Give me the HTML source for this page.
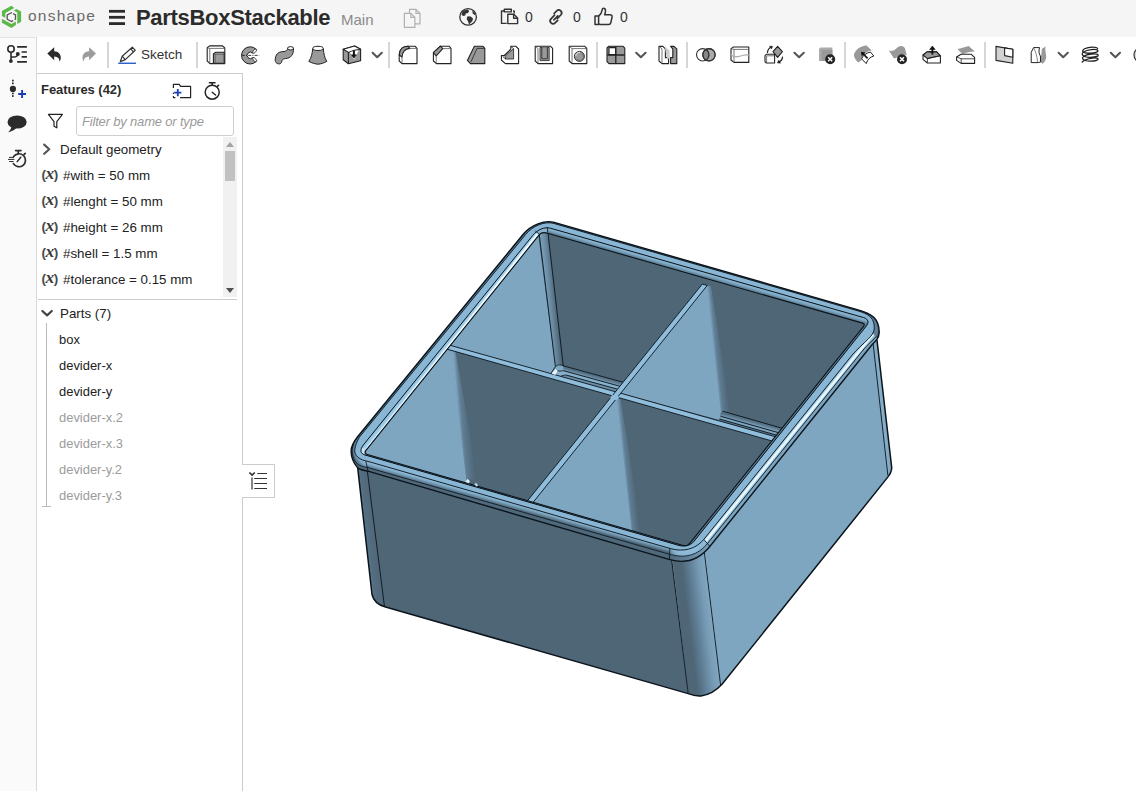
<!DOCTYPE html>
<html lang="en">
<head>
<meta charset="utf-8">
<title>PartsBoxStackable</title>
<style>
html,body{margin:0;padding:0;}
body{width:1136px;height:791px;overflow:hidden;position:relative;background:#fff;font-family:"Liberation Sans",sans-serif;color:#222;}
.abs{position:absolute;}
#topbar{left:0;top:0;width:1136px;height:37px;background:#f5f5f5;}
#leftbar{left:0;top:37px;width:36px;height:754px;background:#fafafa;border-right:1px solid #d9d9d9;}
#toolbar{left:37px;top:37px;width:1099px;height:36px;background:#fff;}
#panel{left:37px;top:73px;width:205px;height:718px;background:#fff;border-top:1px solid #ccc;border-right:1px solid #ccc;}
.sep{position:absolute;top:42px;width:2px;height:26px;background:#d6d6d6;}
.t{position:absolute;white-space:nowrap;line-height:1;}
.row{position:absolute;left:41px;font-size:13.35px;color:#222;white-space:nowrap;line-height:1;}
.prow{position:absolute;left:59px;font-size:12.95px;color:#222;white-space:nowrap;line-height:1;}
.dim{color:#9c9c9c;}
svg{position:absolute;overflow:visible;}
.vx{position:absolute;left:41.5px;font-size:13.5px;font-weight:bold;color:#4a4a4a;white-space:nowrap;line-height:1;letter-spacing:-0.6px;}
.vx i{font-family:"Liberation Serif",serif;font-weight:bold;font-style:italic;font-size:17.5px;letter-spacing:-0.3px;color:#3a3a3a;}
</style>
</head>
<body>
<div id="topbar" class="abs"></div>
<div id="leftbar" class="abs"></div>
<div id="toolbar" class="abs"></div>
<div id="panel" class="abs"></div>

<!-- top bar text -->
<div class="t" id="t-onshape" style="left:28px;top:7.8px;font-size:15.5px;color:#6a6a6a;letter-spacing:1.25px;">onshape</div>
<div class="t" id="t-title" style="left:136px;top:6.7px;font-size:22px;font-weight:bold;color:#2b2b2b;letter-spacing:-0.3px;">PartsBoxStackable</div>
<div class="t" id="t-main" style="left:341px;top:12px;font-size:15px;color:#8a8a8a;">Main</div>
<div class="t" id="t-c1" style="left:525px;top:10px;font-size:14px;color:#333;">0</div>
<div class="t" id="t-c2" style="left:573px;top:10px;font-size:14px;color:#333;">0</div>
<div class="t" id="t-c3" style="left:620px;top:10px;font-size:14px;color:#333;">0</div>

<!-- toolbar -->
<div class="sep" style="left:107px;"></div>
<div class="sep" style="left:196px;"></div>
<div class="sep" style="left:388px;"></div>
<div class="sep" style="left:596px;"></div>
<div class="sep" style="left:686px;"></div>
<div class="sep" style="left:844px;"></div>
<div class="sep" style="left:984px;"></div>
<div class="t" id="t-sketch" style="left:141px;top:47.9px;font-size:13.5px;color:#333;">Sketch</div>

<!-- panel -->
<div class="t" id="t-feat" style="left:41px;top:83.2px;font-size:13px;font-weight:bold;color:#2b2b2b;letter-spacing:-0.05px;">Features (42)</div>
<div class="abs" style="left:76px;top:106px;width:156px;height:28px;border:1px solid #cfcfcf;border-radius:3px;background:#fff;"></div>
<div class="t" id="t-filter" style="left:82px;top:115px;font-size:13px;font-style:italic;color:#9a9a9a;letter-spacing:-0.18px;">Filter by name or type</div>

<div class="abs" style="left:223px;top:137px;width:14px;height:160px;background:#f1f1f1;"></div>
<div class="abs" style="left:225px;top:151px;width:10px;height:30px;background:#c1c1c1;"></div>
<div class="abs" style="left:226px;top:142px;width:0;height:0;border-left:4px solid transparent;border-right:4px solid transparent;border-bottom:5px solid #a3a3a3;"></div>
<div class="abs" style="left:226px;top:288px;width:0;height:0;border-left:4px solid transparent;border-right:4px solid transparent;border-top:5px solid #505050;"></div>

<div class="row" style="left:60px;top:142.5px;">Default geometry</div>
<div class="row" style="left:63px;top:168.5px;">#with = 50 mm</div>
<div class="row" style="left:63px;top:194.5px;">#lenght = 50 mm</div>
<div class="row" style="left:63px;top:220.5px;">#height = 26 mm</div>
<div class="row" style="left:63px;top:246.5px;">#shell = 1.5 mm</div>
<div class="row" style="left:63px;top:272.5px;">#tolerance = 0.15 mm</div>

<div class="vx" style="top:164.5px;">(<i>x</i>)</div>
<div class="vx" style="top:190.5px;">(<i>x</i>)</div>
<div class="vx" style="top:216.5px;">(<i>x</i>)</div>
<div class="vx" style="top:242.5px;">(<i>x</i>)</div>
<div class="vx" style="top:268.5px;">(<i>x</i>)</div>
<div class="abs" style="left:38px;top:299px;width:199px;height:1px;background:#ccc;"></div>
<div class="row" style="left:60px;top:306.8px;">Parts (7)</div>
<div class="prow" style="top:333.6px;">box</div>
<div class="prow" style="top:359.6px;">devider-x</div>
<div class="prow" style="top:385.6px;">devider-y</div>
<div class="prow dim" style="top:411.6px;">devider-x.2</div>
<div class="prow dim" style="top:437.6px;">devider-x.3</div>
<div class="prow dim" style="top:463.6px;">devider-y.2</div>
<div class="prow dim" style="top:489.6px;">devider-y.3</div>
<div class="abs" style="left:46px;top:323px;width:1px;height:184px;background:#bbb;"></div>
<div class="abs" style="left:42px;top:506px;width:9px;height:1px;background:#bbb;"></div>

<!-- panel collapse tab -->
<div class="abs" style="left:242px;top:464px;width:32px;height:32px;background:#fff;border:1px solid #ccc;border-left:none;"></div>
<div class="abs" style="left:0;top:37px;width:36px;height:1px;background:#e4e4e4;"></div>
<svg width="1136" height="75" viewBox="0 0 1136 75" style="left:0;top:0;">
<!-- onshape logo -->
<g>
<polygon points="1.9,11.1 11.4,5.8 14.3,7.9 5.3,12.9 5.3,18 1.9,16.1" fill="#5cb848"/>
<polygon points="13.7,10.6 16.4,9 21.1,11.4 21.1,21.7 17.4,24 17.2,12.4" fill="#5cb848"/>
<polygon points="1.9,18.8 11.4,24 15.9,21.4 15.9,25.1 11.4,28 1.9,22.7" fill="#5cb848"/>
<polyline points="12,12.5 7.2,15 7.2,19.2 11.4,21.5 13.2,20.6" fill="none" stroke="#555" stroke-width="1.3"/>
<polyline points="13.2,13.6 15.5,14.9 15.5,19.2 14.6,19.8" fill="none" stroke="#555" stroke-width="1.3"/>
</g>
<!-- hamburger -->
<rect x="109" y="9.9" width="16" height="2.8" fill="#2b2b2b"/><rect x="109" y="15.9" width="16" height="2.8" fill="#2b2b2b"/><rect x="109" y="22.2" width="16" height="2.8" fill="#2b2b2b"/>
<!-- copy icon (gray) -->
<g fill="#f5f5f5" stroke="#b0b0b0" stroke-width="1.2" stroke-linejoin="round">
<path d="M409.5,9.4 h6.5 l4,4 v10.5 h-10.5 z"/><path d="M416,9.4 v4 h4" fill="none"/>
<path d="M404.4,13.4 h6.5 l4,4 v10 h-10.5 z"/><path d="M410.9,13.4 v4 h4" fill="none"/>
</g>
<!-- globe -->
<g>
<circle cx="468.1" cy="16.9" r="8.3" fill="#f5f5f5" stroke="#333" stroke-width="1.3"/>
<path d="M462.5,11.5 c1.5,-1.2 3.5,-2 5.2,-2 l1.5,1.6 -1.2,1.8 -2.2,0.5 -0.6,2 -2,0.6 -1.8,-1.2 z" fill="#333"/>
<path d="M467.5,16.3 l3.2,0.3 2.3,1.8 -0.6,2.6 -2.2,2.3 -1.2,1.2 -0.9,-3 -1.5,-2.4 z" fill="#333"/>
<path d="M472.5,10.8 c1.5,1 2.8,2.6 3.3,4.3 l-1.8,-0.3 -1.5,-1.7 z" fill="#333"/>
</g>
<!-- clipboard -->
<g fill="none" stroke="#333" stroke-width="1.4" stroke-linejoin="round">
<path d="M506.5,11 h-5 v12.4 h5.2"/><path d="M513,11 h1.2 v2.5"/>
<rect x="504.3" y="9.3" width="7" height="2.6" fill="#f5f5f5"/>
<path d="M507.8,14.2 h6 l3.8,3.8 v5.6 h-9.8 z" fill="#f5f5f5"/><path d="M513.6,14.4 v3.8 h3.8"/>
</g>
<!-- link -->
<g fill="none" stroke="#333" stroke-width="1.7" stroke-linecap="round">
<path d="M554.6,15.2 l-3.6,3.6 a2.9,2.9 0 0 0 4.1,4.1 l2.6,-2.6"/>
<path d="M557.2,18.6 l3.6,-3.6 a2.9,2.9 0 0 0 -4.1,-4.1 l-2.6,2.6"/>
<path d="M553.9,19.9 l4,-4"/>
</g>
<!-- thumbs up -->
<g fill="none" stroke="#333" stroke-width="1.5" stroke-linejoin="round">
<path d="M595,16 h3.6 v8.6 h-3.6 z"/>
<path d="M598.6,16.2 c2,-1.6 3.2,-3.6 3.6,-6.4 c0.1,-1.2 0.8,-1.6 1.6,-1.5 c1.2,0.2 1.8,1.2 1.7,2.8 c-0.1,1.2 -0.4,2.4 -0.9,3.6 h5.4 c1.5,0 2.3,0.9 2.1,2.1 l-1.3,6 c-0.3,1.2 -1,1.8 -2.2,1.8 h-7.5 c-0.9,0 -1.6,-0.3 -2.5,-0.8"/>
</g>

<!-- left bar icon 1: feature tree -->
<g stroke="#2b2b2b" fill="none" stroke-width="1.6">
<circle cx="11" cy="49" r="3.2" fill="#fafafa"/>
<path d="M11,52.2 V61 M11,57 H13.8 C16.4,57 17.6,56 17.8,54"/>
<circle cx="10.9" cy="61.1" r="1.9" fill="#2b2b2b" stroke="none"/><circle cx="17.8" cy="53.9" r="2" fill="#2b2b2b" stroke="none"/>
<path d="M17.1,46.8 H26.9 M21.6,52 H26.9 M21.6,56.9 H26.9 M17.1,61.9 H26.9" stroke-width="1.7"/>
</g>

<!-- undo / redo -->
<path d="M47.3,53.6 L54.2,47.2 V51.2 C58.5,51.4 60.8,54.2 60.8,57.6 C60.8,59.2 60.3,60.6 59.5,61.8 C59.6,58.6 58,56.6 54.2,56.4 V60.2 Z" fill="#2b2b2b"/>
<path d="M96,53.6 L89.1,47.2 V51.2 C84.8,51.4 82.5,54.2 82.5,57.6 C82.5,59.2 83,60.6 83.8,61.8 C83.7,58.6 85.3,56.6 89.1,56.4 V60.2 Z" fill="#9c9c9c"/>
<!-- pencil -->
<g fill="none" stroke="#333" stroke-width="1.2" stroke-linejoin="round">
<path d="M120.3,61.8 L122.2,56.2 L132.3,47.2 L135.2,50.2 L125.3,59.6 Z"/><path d="M122.2,56.2 L125.3,59.6"/><path d="M130.6,48.8 L133.5,51.8"/>
</g>
<rect x="118.2" y="62.6" width="17.8" height="1.3" fill="#1a53c5"/>

<!-- tb icon 1: extrude -->
<g stroke="#222" stroke-width="1.1" stroke-linejoin="round">
<path d="M207.2,47.8 L209.6,45.9 H222.6 L224.8,48 V63.6 H210 L207.2,61 Z" fill="#fff"/>
<path d="M209.8,48.4 H224.6 M209.8,48.4 V63.4 M207.4,47.9 L209.8,48.4" fill="none" stroke-width="0.8" stroke="#555"/>
<path d="M213.4,54 L215.4,52.3 H224.2 V63.2 H213.4 Z" fill="#999"/>
<path d="M215.2,54.3 H224 M215.2,54.3 V63 M213.5,54 L215.2,54.3" fill="none" stroke-width="0.7" stroke="#555"/>
</g>
<!-- tb icon 2: revolve -->
<g stroke="#222" stroke-width="1">
<path d="M256.3,49.4 A8.6,8.6 0 1 0 256.3,61.4 L252.6,57.6 A3.2,3.2 0 1 1 252.6,53.2 Z" fill="#999"/>
<ellipse cx="254.6" cy="51.2" rx="2.6" ry="1.3" transform="rotate(-48 254.6 51.2)" fill="#fff" stroke-width="0.8"/>
<ellipse cx="254.6" cy="59.6" rx="2.6" ry="1.3" transform="rotate(48 254.6 59.6)" fill="#fff" stroke-width="0.8"/>
<path d="M241.8,55.4 H259.2" stroke-dasharray="3 1.2 1 1.2" fill="none" stroke-width="0.9"/>
</g>
<!-- tb icon 3: sweep -->
<g stroke="#222" stroke-width="1" stroke-linejoin="round">
<path d="M275.2,60.4 C275.2,54.6 278,51.8 283,51.6 C286,51.5 287.4,50.8 287.6,48.2 L293.5,48.2 C293.8,54.4 291,58.2 285.6,58.6 C282.8,58.8 282,59.6 281.8,61.6 C281.5,65 275.4,64.6 275.2,60.4 Z" fill="#999"/>
<ellipse cx="290.5" cy="48.3" rx="2.9" ry="1.7" fill="#fff"/>
</g>
<!-- tb icon 4: loft -->
<g stroke="#222" stroke-width="1" stroke-linejoin="round">
<path d="M312.8,48.4 C312.2,54 311.2,58 308.8,61.4 C312,63 315,64 318,64.2 C321,64 324,63 326.8,61.4 C324.6,58 323.8,54 323.2,48.4 Z" fill="#999"/>
<ellipse cx="318" cy="48.4" rx="5.2" ry="2.1" fill="#fff"/>
</g>
<!-- tb icon 5: thicken -->
<g stroke="#222" stroke-width="1.1" stroke-linejoin="round">
<path d="M343.2,49.2 L354.6,46 L360.6,49.2 V60.7 L348.4,63.8 L343.2,59.8 Z" fill="#999"/>
<path d="M343.2,49.2 L354.6,46 L360.6,49.2 C356.5,49.4 352.5,50.4 348.4,52.4 Z" fill="#fff"/>
<path d="M348.4,52.4 V63.8" fill="none"/>
<path d="M349.8,52.2 C352.6,51 355.6,50.4 358.6,50.4 L354.1,59.8 Z" fill="#fff" stroke="none"/>
<path d="M353.9,50.6 V56" stroke="#111" stroke-width="2" fill="none"/><path d="M351.3,54.8 H356.5 L353.9,58.2 Z" fill="#111" stroke="#111" stroke-width="0.5"/>
</g>
<!-- chevrons -->
<g fill="none" stroke="#555" stroke-width="2.1" stroke-linecap="round" stroke-linejoin="round">
<path d="M372.6,52.8 L377.2,57.2 L381.8,52.8"/>
<path d="M636.2,52.8 L640.9,57.2 L645.6,52.8"/>
<path d="M794.4,52.8 L799.1,57.2 L803.8,52.8"/>
<path d="M1058.6,52.8 L1063.2,57.2 L1067.8,52.8"/>
<path d="M1110.8,52.8 L1115.4,57.2 L1120,52.8"/>
</g>
<!-- tb icon 6: fillet -->
<g stroke="#222" stroke-width="1.1" stroke-linejoin="round">
<path d="M399.2,55 C399.4,49.4 403,46.2 408,46.2 H415 L417,48.4 V63.6 H402 L399.2,61 Z" fill="#fff"/>
<path d="M399.2,55 C399.4,49.4 403,46.2 408,46.2 L409.8,48.4 C405.6,48.8 402.4,51.6 402,57 Z" fill="#999"/>
<path d="M402,57 V63.4 M409.8,48.4 H416.8" fill="none" stroke-width="0.8" stroke="#555"/>
</g>
<!-- tb icon 7: chamfer -->
<g stroke="#222" stroke-width="1.1" stroke-linejoin="round">
<path d="M433.4,52.6 L440.4,46.2 H449 L451,48.4 V63.6 H436.4 L433.4,61 Z" fill="#fff"/>
<path d="M433.4,52.6 L440.4,46.2 L442.8,48.6 L436.2,55.8 Z" fill="#999"/>
<path d="M436.2,55.8 V63.4 M442.8,48.6 H450.8" fill="none" stroke-width="0.8" stroke="#555"/>
</g>
<!-- tb icon 8: draft -->
<g stroke="#222" stroke-width="1.1" stroke-linejoin="round">
<path d="M467.4,60.4 L474.4,46.2 H482.8 L484.8,48.4 V63.6 H470.4 Z" fill="#999"/>
<path d="M471,61.8 L477,48.4 H484.6" fill="none" stroke-width="0.8"/>
</g>
<!-- tb icon 9: rib -->
<g stroke="#222" stroke-width="1.1" stroke-linejoin="round">
<path d="M501.4,55.6 H504 L510.8,49.2 V46.2 H515.6 L518.6,49 V63.6 H505.4 L501.4,60 Z" fill="#fff"/>
<path d="M505,56.2 L513.6,48.6 V59 H505.6 Z" fill="#999" stroke-width="0.8"/>
<path d="M504.2,55.8 L511,49.4 M505.6,59 L503,56.8 M513.6,48.6 L511,46.6" fill="none" stroke-width="0.8"/>
</g>
<!-- tb icon 10: shell -->
<g stroke="#222" stroke-width="1.1" stroke-linejoin="round">
<path d="M535.2,46.2 H550.4 L552.6,48.4 V63.6 H538 L535.2,61 Z" fill="#fff"/>
<path d="M540,47.4 H549.2 V60.6 H540 Z" fill="#999" stroke-width="0.8"/>
<path d="M541.8,47.4 V58.8 H547.4 V47.4" fill="#999" stroke-width="0.8"/>
<path d="M538,48.6 V63.4 M535.4,46.4 L538,48.6" fill="none" stroke-width="0.8" stroke="#555"/>
</g>
<!-- tb icon 11: hole -->
<g stroke="#222" stroke-width="1.1" stroke-linejoin="round">
<path d="M569.2,46.2 H584.6 L586.8,48.4 V63.6 H572 L569.2,61 Z" fill="#fff"/>
<path d="M572,48.6 H586.6 M572,48.6 V63.4 M569.4,46.4 L572,48.6" fill="none" stroke-width="0.8" stroke="#555"/>
<circle cx="579.4" cy="56.4" r="5" fill="#999" stroke-width="0.9"/>
<path d="M575.8,56 A3.6,3.6 0 0 1 579.8,52.4" fill="none" stroke="#eee" stroke-width="1"/>
<path d="M582.6,54.2 A3.6,3.6 0 0 1 577,59.4" fill="none" stroke="#666" stroke-width="0.9"/>
</g>
<!-- tb icon 12: pattern -->
<g stroke="#222" stroke-width="1.1" stroke-linejoin="round">
<path d="M607,48 L608.8,46.2 H622.8 L624.8,48.2 V63.6 H609 L607,61.6 Z" fill="#999"/>
<rect x="609" y="47.6" width="6.6" height="7" fill="#fff"/>
<path d="M615.8,46.4 V63.4 M607.2,55 H624.6" fill="none" stroke-width="1.3"/>
</g>
<!-- tb icon 13: mirror -->
<g stroke="#222" stroke-width="1.1" stroke-linejoin="round">
<path d="M659,46.4 H662.8 L665.4,48.8 V57.6 H668.6 V63.6 H662 L659,61 Z" fill="#fff"/>
<path d="M662,48.8 V63.4 M659.2,46.6 L662,48.8" fill="none" stroke-width="0.8" stroke="#555"/>
<path d="M664.8,46.4 L669.6,50.4 V59.6 L666.6,57.2 Z" fill="#ccc" stroke="none"/>
<path d="M670.6,46.4 H674 L676.8,48.8 V63.6 H670.6 V57.6 H672.8 V48.8 Z" fill="#999"/>
</g>
<!-- tb icon 14: boolean -->
<g stroke="#333" stroke-width="1.1">
<circle cx="709" cy="54.8" r="6.2" fill="#aaa"/>
<circle cx="702.7" cy="54.8" r="6.2" fill="#fff"/>
<path d="M705.85,49.46 A6.2,6.2 0 0 1 705.85,60.14 A6.2,6.2 0 0 1 705.85,49.46 Z" fill="#888"/>
<circle cx="709" cy="54.8" r="6.2" fill="none"/>
</g>
<!-- tb icon 15: split -->
<g stroke="#222" stroke-width="1.1" stroke-linejoin="round" fill="none">
<path d="M731,48.6 L733.6,47 H748.8 V62.4 H734 L731,60 Z" fill="#fff"/>
<path d="M734,49.4 H748.6 M734,49.4 V62.2 M731.2,48.7 L734,49.4" stroke-width="0.8" stroke="#555"/>
<path d="M730.6,54.4 C733,57 735.6,57.4 739,56.4 C743,55 746,54.4 750,55.2" stroke="#aaa" stroke-width="1.1"/>
</g>
<!-- tb icon 16: transform -->
<g stroke="#222" stroke-width="1.1" stroke-linejoin="round">
<path d="M765,55.6 L766.6,54.2 H774.6 V63 H766.4 L765,61.8 Z" fill="#fff"/>
<path d="M766.6,55.8 H774.4 M766.6,55.8 V62.8" fill="none" stroke-width="0.8" stroke="#555"/>
<path d="M777.6,46.4 L782.4,51.6 L777.6,57.4 L773,51.6 Z" fill="#999"/>
<path d="M767.4,53 C767.6,50 769,48 771.4,46.8" fill="none" stroke-width="1.2"/><path d="M769.6,46.2 L772.6,46.4 L771.4,49 Z" fill="#222" stroke-width="0.6"/>
<path d="M782.6,56.6 C782.4,59.4 781,61.2 778.8,62.4" fill="none" stroke-width="1.2"/><path d="M780.4,63.2 L777.4,62.8 L778.8,60.2 Z" fill="#222" stroke-width="0.6"/>
</g>
<!-- tb icon 17: delete part -->
<g>
<path d="M819,49 L820.6,47.6 H832.4 V61 H819 Z" fill="#aaa"/>
<path d="M821.6,50 H832.4 V61 H821.6 Z" fill="#999"/>
<circle cx="830.2" cy="59.2" r="5" fill="#222"/>
<path d="M828.2,57.2 L832.2,61.2 M832.2,57.2 L828.2,61.2" stroke="#fff" stroke-width="1.5" fill="none"/>
</g>
<!-- tb icon 18: move face -->
<g stroke-linejoin="round">
<path d="M853.8,55 C855.4,49.6 860.4,46 866.6,45.6 L871.6,50.4 C866,51.2 863,54.6 861.8,60 L858.4,62.6 C856,60.6 854.4,58 853.8,55 Z" fill="#999"/>
<path d="M861.6,58.8 C863,55.6 866,53 870.4,52 L873.8,56 C870,57 867.4,59.6 866.2,63.6 Z" fill="#fff" stroke="#222" stroke-width="1"/>
<path d="M862,52.8 L867.6,58.4" stroke="#111" stroke-width="1.6" fill="none"/><path d="M861,51.8 L865.4,52.6 L861.8,56.2 Z" fill="#111"/>
</g>
<!-- tb icon 19: delete face -->
<g>
<path d="M888.8,50.6 C892,52 895,50 898,47 C900.6,45 903.6,46 904.8,48 L906.8,55 C903,53.6 900,54.6 897,57.6 L894,58.6 Z" fill="#999"/>
<circle cx="902" cy="59.2" r="5" fill="#222"/>
<path d="M900,57.2 L904,61.2 M904,57.2 L900,61.2" stroke="#fff" stroke-width="1.5" fill="none"/>
</g>
<!-- tb icon 20: replace face -->
<g stroke="#222" stroke-width="1.1" stroke-linejoin="round">
<path d="M923,55 L927.4,51.6 H936.4 L940.4,55.8 V63 H927.4 L923,59.4 Z" fill="#fff"/>
<path d="M923,55 L927.4,51.6 C930,53 933,52 936.4,51.6 L940.4,55.8 C936,56.6 931.6,57.4 927.4,58.6 Z" fill="#999"/>
<path d="M927.4,58.6 V62.8 M927.4,58.6 L940.2,55.9" fill="none" stroke-width="0.8"/>
<path d="M932.4,54.6 V48.6" stroke="#111" stroke-width="1.8" fill="none"/><path d="M929.6,49.6 L932.4,46 L935.2,49.6 Z" fill="#111" stroke="#111" stroke-width="0.6"/>
</g>
<!-- tb icon 21: offset surface -->
<g stroke-linejoin="round">
<path d="M957.4,49 C961,48.6 964,47.4 968.6,46 L974.8,51.4 C970,51.6 966,52.6 962.4,54 Z" fill="#999"/>
<path d="M956.6,57 L961,54.2 H971 L974.6,57.4 V63.4 H961.2 L956.6,60.4 Z" fill="#fff" stroke="#222" stroke-width="1.1"/>
<path d="M956.8,57 L961.2,58.8 H974.4 M961.2,58.8 V63.2" fill="none" stroke="#222" stroke-width="0.8"/>
</g>
<!-- tb icon 22: plane -->
<g stroke="#222" stroke-width="1.1" stroke-linejoin="round">
<path d="M996,46.4 L1012.8,49.2 V63.2 L996,60.4 Z" fill="#d2d2d2"/>
<path d="M1004.6,47.9 L1012.8,49.2 V57.2 L1004.6,55.6 Z" fill="#fff"/>
</g>
<!-- tb icon 23 -->
<g stroke-linejoin="round">
<path d="M1042,48.8 L1045.6,46.6 C1044.6,50 1046.4,54 1046.2,57.6 C1046,60.2 1044.4,62.4 1042.6,63.8 L1040.4,62 Z" fill="#999"/>
<path d="M1031.2,52.4 L1033.6,47.6 H1039.6 C1038.6,51 1038.8,53.6 1040.4,56 L1040.6,62 L1038.2,62.6 H1031.2 Z" fill="#fff" stroke="#222" stroke-width="1"/>
<path d="M1033.6,47.6 C1035.4,51 1037,55.6 1037.6,62.4" fill="none" stroke="#555" stroke-width="0.7"/>
</g>
<!-- tb icon 24: helix -->
<g fill="none" stroke="#222" stroke-width="1.3" stroke-linecap="round">
<path d="M1097.6,48.6 C1097,46.6 1089,46.4 1084.6,48.8 C1080.6,51 1083,53.6 1090,53.2 C1096,52.8 1099,51.6 1097.6,50.2 C1096,48.8 1087,49.6 1083.6,52 C1080,54.6 1084,57.6 1090.4,57.4 C1096.4,57.2 1099.2,56 1097.8,54.6 C1096,53 1087,54 1083.6,56.4 C1081,58.4 1083.4,61.4 1090.4,61.2 C1096,61 1099,59.8 1097.8,58.6 C1096,57 1086,58.4 1082.2,62"/>
</g>
<!-- tb icon 25 partial -->
<circle cx="1142" cy="55" r="8" fill="#ddd" stroke="#333" stroke-width="1.2"/>
</svg>

<svg width="40" height="120" viewBox="0 73 40 120" style="left:0;top:73px;">
<!-- insert icon -->
<g fill="#2b2b2b">
<rect x="12" y="79.7" width="1.7" height="1.7"/><rect x="12" y="82.5" width="1.7" height="1.7"/>
<rect x="12" y="92.6" width="1.7" height="1.7"/><rect x="12" y="95.2" width="1.7" height="1.7"/>
<circle cx="12.9" cy="88.9" r="3.1"/>
</g>
<path d="M18.2,94 H26 M22.1,90.1 V97.9" stroke="#1a3fb5" stroke-width="1.9" fill="none"/>
<!-- comment bubble -->
<ellipse cx="17.1" cy="122" rx="9.6" ry="6.6" fill="#2b2b2b"/>
<path d="M11.4,126.6 C11.2,128.8 10.2,130.6 8.2,132.2 C11.8,131.6 14.6,130 16.2,128 Z" fill="#2b2b2b"/>
<!-- stopwatch w/ speed lines -->
<g fill="none" stroke="#2b2b2b" stroke-width="1.7" stroke-linecap="round">
<path d="M13.6,156.6 A6.5,6.5 0 1 1 13.4,163.6"/>
<path d="M15.6,150.6 H21 M18.3,150.8 V153.4 M24.2,154.4 L25.2,153.4" stroke-width="1.6"/>
<path d="M17.2,161.6 L20.8,157.2" stroke-width="1.5"/>
<path d="M9.4,157.4 H13.6 M8.4,159.4 H14 M9.6,161.5 H13.2" stroke-width="1"/>
</g>
</svg>

<svg width="205" height="60" viewBox="37 78 205 60" style="left:37px;top:78px;">
<!-- folder+ icon -->
<g fill="none" stroke="#222" stroke-width="1.2" stroke-linejoin="round">
<path d="M173.4,88 V84.4 H179.2 L180.6,86.4 H190.6 V97.6 H180"/>
<path d="M173.4,92.4 V94 M173.4,96 V97.6 H175.4" stroke-width="1.1"/>
</g>
<path d="M174.2,92.6 H181.4 M177.8,89 V96.2" stroke="#1a3fb5" stroke-width="1.8" fill="none"/>
<!-- stopwatch -->
<g fill="none" stroke="#222" stroke-width="1.5" stroke-linecap="round">
<circle cx="212.2" cy="92.2" r="7"/>
<path d="M209.4,82.8 H215 M212.2,83 V85 M218.6,85.2 L217.4,86.4"/>
<path d="M212.2,92.2 L215.6,95" stroke-width="1.4"/>
</g>
<!-- funnel -->
<path d="M48.4,114.4 H62.4 L56.8,121.6 V127.8 L54,126.2 V121.6 Z" fill="none" stroke="#222" stroke-width="1.2" stroke-linejoin="round"/>
</svg>

<!-- chevrons in panel & (x) icons & tab icon -->
<svg width="240" height="400" viewBox="37 137 240 400" style="left:37px;top:137px;">
<path d="M44.2,144.6 L49.2,149.2 L44.2,153.8" fill="none" stroke="#555" stroke-width="2.2" stroke-linecap="round" stroke-linejoin="round"/>
<path d="M42.4,311 L47.1,315.4 L51.8,311" fill="none" stroke="#444" stroke-width="2.2" stroke-linecap="round" stroke-linejoin="round"/>
<g fill="none" stroke="#333" stroke-width="1.1">
<path d="M249.4,472.5 L252.1,475 L254.8,472.5" stroke-width="1.7"/>
<path d="M252,477.4 V489.6" stroke="#777" stroke-width="1.8"/>
<path d="M257.3,473.5 H267 M254.2,478.5 H267 M254.2,483.5 H267 M254.2,488.5 H267" stroke-width="1.2"/>
</g>
</svg>
<svg id="box" width="1136" height="791" viewBox="0 0 1136 791" style="left:0;top:0;">
<defs>
<clipPath id="ring_S"><path clip-rule="evenodd" d="M523.0,234.5 C530.8,225.0 544.6,219.7 554.2,222.4 L858.0,309.8 C864,311.5 870,313.6 874,317.5 C877.5,321 879.3,326 879.2,332.5 C879.1,335.5 878.2,337.8 876.9,339.4 L871.2,345.8 L710.0,546.3 C699.3,559.7 685.6,564.2 669.8,559.6 L368.0,471.2 C363.5,470.4 360.2,469.6 357.7,467.9 C354,463.5 351.2,458 351.1,451.5 C351,447 353.3,442.2 357.4,437 Z M524.2,234.4 C531.7,225.3 544.7,220.2 553.8,222.8 L858.0,310.3 C864,312 869.5,314.2 873.2,318 C876.5,321.5 878,326 877.9,331 C877.8,334 876.6,336.4 874.6,338.4 C871.6,341.4 866.4,345.9 863.9,349 L707.2,543.9 C698.3,554.9 685.1,558.7 670.3,554.5 L368.0,467.6 C363,466.6 359.5,465.8 357.2,463.8 C354,460.5 352.2,456 352.1,451.5 C352,447 354.2,442.5 358.3,437 Z"/></clipPath>
<clipPath id="ring_F2"><path clip-rule="evenodd" d="M524.2,234.4 C531.7,225.3 544.7,220.2 553.8,222.8 L858.0,310.3 C864,312 869.5,314.2 873.2,318 C876.5,321.5 878,326 877.9,331 C877.8,334 876.6,336.4 874.6,338.4 C871.6,341.4 866.4,345.9 863.9,349 L707.2,543.9 C698.3,554.9 685.1,558.7 670.3,554.5 L368.0,467.6 C363,466.6 359.5,465.8 357.2,463.8 C354,460.5 352.2,456 352.1,451.5 C352,447 354.2,442.5 358.3,437 Z M525.7,234.4 C532.7,225.8 545.1,220.9 553.7,223.4 L857.0,310.6 C863,312.4 867.5,314 870.5,317 C873.5,320 874.6,324.5 874.2,329 C873.9,332.5 871.5,336 867.8,339.4 C864.3,343 856,350.3 852.2,355 L704.1,539.1 C696.4,548.8 683.6,552.4 670.5,548.6 L368.0,461.4 C364,460.6 360.5,459.5 357.8,457.2 C355.5,455 354.5,452.5 354.8,449.5 C355.2,445.5 357,441.5 359.5,437 Z"/></clipPath>
<clipPath id="ring_F1"><path clip-rule="evenodd" d="M525.7,234.4 C532.7,225.8 545.1,220.9 553.7,223.4 L857.0,310.6 C863,312.4 867.5,314 870.5,317 C873.5,320 874.6,324.5 874.2,329 C873.9,332.5 871.5,336 867.8,339.4 C864.3,343 856,350.3 852.2,355 L704.1,539.1 C696.4,548.8 683.6,552.4 670.5,548.6 L368.0,461.4 C364,460.6 360.5,459.5 357.8,457.2 C355.5,455 354.5,452.5 354.8,449.5 C355.2,445.5 357,441.5 359.5,437 Z M532.6,235.6 C537.5,229.5 544.6,226.6 550.4,228.2 L863.7,317.6 C868.3,319.0 869.3,322.3 866.3,326.1 L694.1,541.2 C690.8,545.4 684.7,547.1 678.9,545.4 L364.8,454.9 C360.2,453.6 359.7,449.6 363.4,444.9 Z"/></clipPath>
<clipPath id="ring_P2"><path clip-rule="evenodd" d="M532.6,235.6 C537.5,229.5 544.6,226.6 550.4,228.2 L863.7,317.6 C868.3,319.0 869.3,322.3 866.3,326.1 L694.1,541.2 C690.8,545.4 684.7,547.1 678.9,545.4 L364.8,454.9 C360.2,453.6 359.7,449.6 363.4,444.9 Z M539.3,234.7 C540.8,232.8 544.1,232.2 547.6,233.2 L862.6,323.1 C864.3,323.6 864.7,324.9 863.6,326.3 L690.2,542.8 C688.4,545.1 685.2,546.2 682.3,545.3 L367.4,454.5 C365.1,453.9 364.5,452.2 366.0,450.3 Z"/></clipPath>
<clipPath id="open"><path d="M539.3,234.7 C540.8,232.8 544.1,232.2 547.6,233.2 L862.6,323.1 C864.3,323.6 864.7,324.9 863.6,326.3 L690.2,542.8 C688.4,545.1 685.2,546.2 682.3,545.3 L367.4,454.5 C365.1,453.9 364.5,452.2 366.0,450.3 Z"/></clipPath>
<linearGradient id="gFrontFillet" gradientUnits="userSpaceOnUse" x1="480.0" y1="493.7" x2="478.4" y2="499.4"><stop offset="0" stop-color="#8ebcda"/><stop offset="0.35" stop-color="#7ea8c4"/><stop offset="1" stop-color="#4a6172"/></linearGradient>
<linearGradient id="gRightFillet" gradientUnits="userSpaceOnUse" x1="719.5" y1="520.0" x2="723.7" y2="523.4"><stop offset="0" stop-color="#8fc0de"/><stop offset="0.3" stop-color="#d9f0fb"/><stop offset="0.5" stop-color="#ffffff"/><stop offset="0.75" stop-color="#a4d3ef"/><stop offset="1" stop-color="#7aa0ba"/></linearGradient>
<linearGradient id="gLeftCh" gradientUnits="userSpaceOnUse" x1="456.3" y1="330.0" x2="460.2" y2="333.1"><stop offset="0" stop-color="#93c4e2"/><stop offset="0.45" stop-color="#a3d3f0"/><stop offset="0.7" stop-color="#f4fbff"/><stop offset="0.88" stop-color="#ffffff"/><stop offset="1" stop-color="#c5e4f5"/></linearGradient>
<linearGradient id="gBackCh" gradientUnits="userSpaceOnUse" x1="600.0" y1="242.4" x2="598.4" y2="248.0"><stop offset="0" stop-color="#8ab7d5"/><stop offset="0.4" stop-color="#7fa9c5"/><stop offset="1" stop-color="#506a7c"/></linearGradient>
<linearGradient id="gCornerF" gradientUnits="userSpaceOnUse" x1="679.0" y1="620.0" x2="712.0" y2="615.9"><stop offset="0" stop-color="#4F6677"/><stop offset="0.28" stop-color="#4F6677"/><stop offset="0.5" stop-color="#5d7c93"/><stop offset="0.8" stop-color="#789cb6"/><stop offset="1" stop-color="#7FA6C0"/></linearGradient>
<linearGradient id="gCornerL" gradientUnits="userSpaceOnUse" x1="360.0" y1="530.0" x2="377.0" y2="528.0"><stop offset="0" stop-color="#5f7d93"/><stop offset="0.5" stop-color="#536c7f"/><stop offset="1" stop-color="#4F6677"/></linearGradient>
<linearGradient id="gCornerR" gradientUnits="userSpaceOnUse" x1="877.0" y1="400.0" x2="889.0" y2="399.0"><stop offset="0" stop-color="#7FA6C0"/><stop offset="0.4" stop-color="#86afca"/><stop offset="1" stop-color="#7299b2"/></linearGradient>
<linearGradient id="gInCorner" gradientUnits="userSpaceOnUse" x1="545.0" y1="300.0" x2="556.0" y2="299.0"><stop offset="0" stop-color="#7FA6C0"/><stop offset="0.45" stop-color="#6b8ea6"/><stop offset="1" stop-color="#4F6677"/></linearGradient>
<linearGradient id="sh1" gradientUnits="userSpaceOnUse" x1="713.0" y1="348.0" x2="723.0" y2="347.0"><stop offset="0" stop-color="#7FA6C0"/><stop offset="0.35" stop-color="#5e7d93"/><stop offset="1" stop-color="#4F6677"/></linearGradient>
<linearGradient id="sh2" gradientUnits="userSpaceOnUse" x1="623.0" y1="464.0" x2="633.0" y2="463.0"><stop offset="0" stop-color="#7FA6C0"/><stop offset="0.35" stop-color="#5e7d93"/><stop offset="1" stop-color="#4F6677"/></linearGradient>
<linearGradient id="sh3" gradientUnits="userSpaceOnUse" x1="458.0" y1="414.0" x2="470.0" y2="413.0"><stop offset="0" stop-color="#7FA6C0"/><stop offset="0.3" stop-color="#5e7d93"/><stop offset="1" stop-color="#4F6677"/></linearGradient>
<linearGradient id="shL1" gradientUnits="userSpaceOnUse" x1="700.0" y1="350.0" x2="716.0" y2="348.0"><stop offset="0" stop-color="#7FA6C0"/><stop offset="1" stop-color="#749ab3"/></linearGradient>
</defs>
<g stroke-linejoin="round">
<path d="M357.7,467 L372,594.5 C373.5,601 378,605 385.5,607 L688.2,693.6 L671.7,555 Z" fill="#4F6677"/>
<path d="M357.7,467 L372,594.5 C373.5,601 378,605 385.5,607 L384.4,606 L367.3,468 Z" fill="url(#gCornerL)"/>
<path d="M671.7,555 L688.2,693.6 C692.5,695.3 696.5,696.3 701,695.9 C709,695 716,690.8 722,684.3 L720.7,685 L704.4,548 Z" fill="url(#gCornerF)"/>
<path d="M704.4,548 L720.7,685 L722,684.3 L887.6,477.4 C890,474.5 891.8,471.5 891.7,467.5 L876.9,339 L860,350 Z" fill="#7FA6C0"/>
<path d="M873,341 L887.9,475.5 L887.6,477.4 C890,474.5 891.8,471.5 891.7,467.5 L876.9,339 Z" fill="url(#gCornerR)"/>
<path d="M357.7,467.9 L372,594.5 C373.5,601 378,605 385.5,607 L688.2,693.6 C692.5,695.3 696.5,696.3 701,695.9 C709,695 716,690.8 722,684.3 L887.6,477.4 C890,474.5 891.8,471.5 891.7,467.5 L876.9,339.4" fill="none" stroke="#0b141b" stroke-width="1.5"/>
<line x1="367.3" y1="470.7" x2="384.4" y2="606.0" stroke="#0b141b" stroke-width="0.90"/>
<line x1="671.7" y1="560.7" x2="688.2" y2="693.6" stroke="#0b141b" stroke-width="0.90"/>
<line x1="704.4" y1="552.6" x2="720.6" y2="685.2" stroke="#0b141b" stroke-width="0.90"/>
<line x1="873.0" y1="342.7" x2="887.9" y2="475.5" stroke="#0b141b" stroke-width="0.90"/>
</g>
<defs>
<linearGradient id="gFRlip" gradientUnits="userSpaceOnUse" x1="668.0" y1="0.0" x2="710.0" y2="0.0"><stop offset="0" stop-color="#4f687b"/><stop offset="0.5" stop-color="#62829a"/><stop offset="1" stop-color="#7da4be"/></linearGradient>
<radialGradient id="gFRfil" gradientUnits="userSpaceOnUse" cx="688" cy="538" r="24"><stop offset="0.55" stop-color="#8ebcda"/><stop offset="0.78" stop-color="#8ab6d3"/><stop offset="1" stop-color="#5d7c93"/></radialGradient>
<radialGradient id="gFLfil" gradientUnits="userSpaceOnUse" cx="373" cy="450" r="21"><stop offset="0.6" stop-color="#8ebcda"/><stop offset="0.8" stop-color="#7ea8c4"/><stop offset="1" stop-color="#4a6172"/></radialGradient>
</defs>
<path d="M523.0,234.5 C530.8,225.0 544.6,219.7 554.2,222.4 L858.0,309.8 C864,311.5 870,313.6 874,317.5 C877.5,321 879.3,326 879.2,332.5 C879.1,335.5 878.2,337.8 876.9,339.4 L871.2,345.8 L710.0,546.3 C699.3,559.7 685.6,564.2 669.8,559.6 L368.0,471.2 C363.5,470.4 360.2,469.6 357.7,467.9 C354,463.5 351.2,458 351.1,451.5 C351,447 353.3,442.2 357.4,437 Z" fill="#4F6677"/>
<g clip-path="url(#ring_S)">
<polygon points="615.0,390.0 366.0,449.0 340.0,440.3 330.0,300.0 515.0,212.0 525.0,222.6 539.1,234.1" fill="#3d5161" stroke="#3d5161" stroke-width="0.6"/>
<polygon points="539.1,234.1 525.0,222.6 530.0,205.0 547.3,205.0 547.3,240.0" fill="#3d5161" stroke="#3d5161" stroke-width="0.6"/>
<polygon points="615.0,390.0 547.3,240.0 547.3,205.0 910.0,290.0 910.0,352.5 888.0,352.5 865.5,324.0" fill="#3d5161" stroke="#3d5161" stroke-width="0.6"/>
<polygon points="615.0,390.0 865.5,324.0 888.0,352.5 900.0,400.0 715.0,552.5 690.0,523.0" fill="#7da4be" stroke="#7da4be" stroke-width="0.6"/>
<polygon points="690.0,523.0 715.0,552.5 700.0,580.0 669.3,575.0 670.0,530.0" fill="url(#gFRlip)" stroke="none" stroke-width="0.6"/>
<polygon points="615.0,390.0 670.0,530.0 669.3,575.0 369.5,480.0 364.0,452.0" fill="#4f687b" stroke="#4f687b" stroke-width="0.6"/>
<polygon points="364.0,452.0 369.5,480.0 340.0,480.0 340.0,440.3 366.0,449.0" fill="#4f687b" stroke="#4f687b" stroke-width="0.6"/>
</g>
<g clip-path="url(#ring_F2)">
<polygon points="615.0,390.0 366.0,449.0 340.0,440.3 330.0,300.0 515.0,212.0 525.0,222.6 539.1,234.1" fill="#5f8098" stroke="#5f8098" stroke-width="0.6"/>
<polygon points="539.1,234.1 525.0,222.6 530.0,205.0 547.3,205.0 547.3,240.0" fill="#5f8098" stroke="#5f8098" stroke-width="0.6"/>
<polygon points="615.0,390.0 547.3,240.0 547.3,205.0 910.0,290.0 910.0,352.5 888.0,352.5 865.5,324.0" fill="#5f8098" stroke="#5f8098" stroke-width="0.6"/>
<polygon points="615.0,390.0 865.5,324.0 888.0,352.5 900.0,400.0 715.0,552.5 690.0,523.0" fill="url(#gRightFillet)" stroke="none" stroke-width="0.6"/>
<polygon points="690.0,523.0 715.0,552.5 700.0,580.0 669.3,575.0 670.0,530.0" fill="url(#gFRfil)" stroke="none" stroke-width="0.6"/>
<polygon points="615.0,390.0 670.0,530.0 669.3,575.0 369.5,480.0 364.0,452.0" fill="url(#gFrontFillet)" stroke="none" stroke-width="0.6"/>
<polygon points="364.0,452.0 369.5,480.0 340.0,480.0 340.0,440.3 366.0,449.0" fill="url(#gFLfil)" stroke="none" stroke-width="0.6"/>
</g>
<g clip-path="url(#ring_F1)">
<polygon points="615.0,390.0 366.0,449.0 340.0,440.3 330.0,300.0 515.0,212.0 525.0,222.6 539.1,234.1" fill="#89B6D4" stroke="#89B6D4" stroke-width="0.6"/>
<polygon points="539.1,234.1 525.0,222.6 530.0,205.0 547.3,205.0 547.3,240.0" fill="#89B6D4" stroke="#89B6D4" stroke-width="0.6"/>
<polygon points="615.0,390.0 547.3,240.0 547.3,205.0 910.0,290.0 910.0,352.5 888.0,352.5 865.5,324.0" fill="#89B6D4" stroke="#89B6D4" stroke-width="0.6"/>
<polygon points="615.0,390.0 865.5,324.0 888.0,352.5 900.0,400.0 715.0,552.5 690.0,523.0" fill="#89B6D4" stroke="#89B6D4" stroke-width="0.6"/>
<polygon points="690.0,523.0 715.0,552.5 700.0,580.0 669.3,575.0 670.0,530.0" fill="#89B6D4" stroke="#89B6D4" stroke-width="0.6"/>
<polygon points="615.0,390.0 670.0,530.0 669.3,575.0 369.5,480.0 364.0,452.0" fill="#89B6D4" stroke="#89B6D4" stroke-width="0.6"/>
<polygon points="364.0,452.0 369.5,480.0 340.0,480.0 340.0,440.3 366.0,449.0" fill="#89B6D4" stroke="#89B6D4" stroke-width="0.6"/>
</g>
<g clip-path="url(#ring_P2)">
<polygon points="615.0,390.0 366.0,449.0 340.0,440.3 330.0,300.0 515.0,212.0 525.0,222.6 539.1,234.1" fill="url(#gLeftCh)" stroke="none" stroke-width="0.6"/>
<polygon points="539.1,234.1 525.0,222.6 530.0,205.0 547.3,205.0 547.3,240.0" fill="#86b2cf" stroke="#86b2cf" stroke-width="0.6"/>
<polygon points="615.0,390.0 547.3,240.0 547.3,205.0 910.0,290.0 910.0,352.5 888.0,352.5 865.5,324.0" fill="url(#gBackCh)" stroke="none" stroke-width="0.6"/>
<polygon points="615.0,390.0 865.5,324.0 888.0,352.5 900.0,400.0 715.0,552.5 690.0,523.0" fill="#5d7b91" stroke="#5d7b91" stroke-width="0.6"/>
<polygon points="690.0,523.0 715.0,552.5 700.0,580.0 669.3,575.0 670.0,530.0" fill="#5d7b91" stroke="#5d7b91" stroke-width="0.6"/>
<polygon points="615.0,390.0 670.0,530.0 669.3,575.0 369.5,480.0 364.0,452.0" fill="#5d7b91" stroke="#5d7b91" stroke-width="0.6"/>
<polygon points="364.0,452.0 369.5,480.0 340.0,480.0 340.0,440.3 366.0,449.0" fill="#c4e5f7" stroke="#c4e5f7" stroke-width="0.6"/>
</g>
<g clip-path="url(#open)">
<rect x="340" y="215" width="560" height="360" fill="#4F6677"/>
<polygon points="537.0,226.0 555.2,365.2 556.0,376.0 448.0,345.5 451.6,350.5 466.4,478.0 468.5,498.0 340.0,480.0 340.0,430.0" fill="#7FA6C0"/>
<polygon points="538.6,230.0 555.2,365.2 559.0,369.0 563.0,365.9 546.9,224.0" fill="url(#gInCorner)"/>
<defs><linearGradient id="gFlA" gradientUnits="userSpaceOnUse" x1="590.0" y1="373.2" x2="588.8" y2="377.7"><stop offset="0" stop-color="#4F6677"/><stop offset="0.5" stop-color="#5d7b91"/><stop offset="1" stop-color="#7a9fb9"/></linearGradient><linearGradient id="gFlB" gradientUnits="userSpaceOnUse" x1="750.0" y1="419.2" x2="748.8" y2="423.7"><stop offset="0" stop-color="#4F6677"/><stop offset="0.5" stop-color="#5d7b91"/><stop offset="1" stop-color="#7a9fb9"/></linearGradient></defs>
<polygon points="555.2,365.2 559.0,364.6 563.3,365.8 626.0,383.0 622.0,396.0 548.0,375.0" fill="#7fa8c3"/>
<polygon points="563.3,365.8 626.0,383.0 624.0,388.0 563.3,370.7" fill="url(#gFlA)"/>
<polygon points="563.3,370.7 624.0,387.4 622.0,390.4 566.4,375.1 560.2,376.4 556.0,372.0" fill="#86b1ce"/>
<polygon points="566.4,375.1 622.0,390.4 620.0,395.0 560.2,378.4 560.2,376.4" fill="#6a8ca5"/>
<polygon points="722.4,411.1 790.0,430.5 788.0,435.3 721.1,416.4" fill="url(#gFlB)"/>
<polygon points="721.1,416.4 788.0,435.4 786.0,438.0 719.4,419.0" fill="#7da5c0"/>
<polygon points="719.4,419.0 786.0,437.8 784.0,444.0 716.0,424.0" fill="#5d7b91"/>
<polygon points="707.3,285.4 721.2,411.8 719.5,420.0 620.4,393.2" fill="#7FA6C0"/>
<polygon points="706.8,285.4 720.7,411.8 730.5,414.3 711.0,286.3" fill="url(#sh1)"/>
<polygon points="617.1,397.2 632.0,529.3 633.0,540.0 520.0,515.0 533.8,501.6" fill="#7FA6C0"/>
<polygon points="616.8,398.0 631.5,529.3 641.5,532.3 620.5,399.0" fill="url(#sh2)"/>
<polygon points="451.2,350.5 466.0,478.0 478.0,481.5 455.5,351.6" fill="url(#sh3)"/>
<line x1="539.1" y1="233.0" x2="555.4" y2="366.7" stroke="#0b141b" stroke-width="0.90"/>
<line x1="547.3" y1="227.0" x2="563.3" y2="366.2" stroke="#0b141b" stroke-width="0.90"/>
<line x1="563.3" y1="365.8" x2="626.0" y2="383.0" stroke="#0b141b" stroke-width="0.90"/>
<line x1="563.3" y1="370.7" x2="624.0" y2="387.4" stroke="#0b141b" stroke-width="0.90"/>
<line x1="566.4" y1="375.1" x2="622.0" y2="390.4" stroke="#0b141b" stroke-width="0.90"/>
<line x1="555.4" y1="366.7" x2="550.4" y2="374.4" stroke="#0b141b" stroke-width="0.90"/>
<line x1="722.4" y1="411.1" x2="790.0" y2="430.5" stroke="#0b141b" stroke-width="0.90"/>
<line x1="721.1" y1="416.4" x2="788.0" y2="435.4" stroke="#0b141b" stroke-width="0.90"/>
<line x1="719.4" y1="419.0" x2="786.0" y2="437.8" stroke="#0b141b" stroke-width="0.90"/>
<path d="M555.4,366.7 C557,364.6 560.5,364.2 563.3,365.8 M560.2,376.6 C562,375.4 564,375 566.4,375.1 M557.4,370.6 C559,371.2 561,371.2 563.3,370.7" fill="none" stroke="#0b141b" stroke-width="0.8"/>
<polygon points="448.0,344.7 776.8,437.1 790.0,441.0 771.8,440.9 445.0,348.6" fill="#8fbddb" stroke="#0b141b" stroke-width="0.9"/>
<polygon points="702.3,284.1 707.3,285.4 530.2,506.0 524.1,505.0" fill="#8fbddb" stroke="#0b141b" stroke-width="0.9"/>
<polygon points="612.3,394.7 619.6,396.8 616.7,400.2 609.9,398.2" fill="#8fbddb"/>
</g>
<defs><clipPath id="cFR"><polygon points="615.0,390.0 865.5,324.0 888.0,352.5 900.0,400.0 715.0,552.5 690.0,523.0"/><polygon points="690.0,523.0 715.0,552.5 700.0,580.0 669.3,575.0 670.0,530.0"/><polygon points="615.0,390.0 670.0,530.0 669.3,575.0 369.5,480.0 364.0,452.0"/><polygon points="364.0,452.0 369.5,480.0 340.0,480.0 340.0,440.3 366.0,449.0"/></clipPath></defs>
<path d="M524.2,234.4 C531.7,225.3 544.7,220.2 553.8,222.8 L858.0,310.3 C864,312 869.5,314.2 873.2,318 C876.5,321.5 878,326 877.9,331 C877.8,334 876.6,336.4 874.6,338.4 C871.6,341.4 866.4,345.9 863.9,349 L707.2,543.9 C698.3,554.9 685.1,558.7 670.3,554.5 L368.0,467.6 C363,466.6 359.5,465.8 357.2,463.8 C354,460.5 352.2,456 352.1,451.5 C352,447 354.2,442.5 358.3,437 Z" fill="none" stroke="#0b141b" stroke-width="0.8" clip-path="url(#cFR)"/>
<path d="M525.7,234.4 C532.7,225.8 545.1,220.9 553.7,223.4 L857.0,310.6 C863,312.4 867.5,314 870.5,317 C873.5,320 874.6,324.5 874.2,329 C873.9,332.5 871.5,336 867.8,339.4 C864.3,343 856,350.3 852.2,355 L704.1,539.1 C696.4,548.8 683.6,552.4 670.5,548.6 L368.0,461.4 C364,460.6 360.5,459.5 357.8,457.2 C355.5,455 354.5,452.5 354.8,449.5 C355.2,445.5 357,441.5 359.5,437 Z" fill="none" stroke="#0b141b" stroke-width="0.9"/>
<path d="M532.6,235.6 C537.5,229.5 544.6,226.6 550.4,228.2 L863.7,317.6 C868.3,319.0 869.3,322.3 866.3,326.1 L694.1,541.2 C690.8,545.4 684.7,547.1 678.9,545.4 L364.8,454.9 C360.2,453.6 359.7,449.6 363.4,444.9 Z" fill="none" stroke="#0b141b" stroke-width="1.0"/>
<path d="M539.3,234.7 C540.8,232.8 544.1,232.2 547.6,233.2 L862.6,323.1 C864.3,323.6 864.7,324.9 863.6,326.3 L690.2,542.8 C688.4,545.1 685.2,546.2 682.3,545.3 L367.4,454.5 C365.1,453.9 364.5,452.2 366.0,450.3 Z" fill="none" stroke="#0b141b" stroke-width="1.1"/>
<path d="M523.0,234.5 C530.8,225.0 544.6,219.7 554.2,222.4 L858.0,309.8 C864,311.5 870,313.6 874,317.5 C877.5,321 879.3,326 879.2,332.5 C879.1,335.5 878.2,337.8 876.9,339.4 L871.2,345.8 L710.0,546.3 C699.3,559.7 685.6,564.2 669.8,559.6 L368.0,471.2 C363.5,470.4 360.2,469.6 357.7,467.9 C354,463.5 351.2,458 351.1,451.5 C351,447 353.3,442.2 357.4,437 Z" fill="none" stroke="#0b141b" stroke-width="1.4"/>
<line x1="547.3" y1="227.6" x2="547.6" y2="232.4" stroke="#0b141b" stroke-width="0.80"/>
<line x1="535.3" y1="231.0" x2="539.1" y2="234.1" stroke="#0b141b" stroke-width="0.80"/>
<polygon points="551.6,373.6 555.4,368.9 557.6,370.7 555.4,375" fill="#e8f5fc"/>
<polygon points="465.3,481.4 467.6,478.8 470.0,481.2 468.6,483.4" fill="#d6ecf8"/>
<polygon points="474.2,484.4 476.0,482.8 478.2,485.4 476.6,486.6" fill="#b9dcf0"/>
<line x1="365.8" y1="461.2" x2="368.0" y2="471.2" stroke="#0b141b" stroke-width="0.80"/>
<line x1="669.8" y1="548.2" x2="669.5" y2="559.0" stroke="#0b141b" stroke-width="0.80"/>
<line x1="704.2" y1="539.8" x2="709.8" y2="546.4" stroke="#0b141b" stroke-width="0.80"/>
</svg>
</body>
</html>
